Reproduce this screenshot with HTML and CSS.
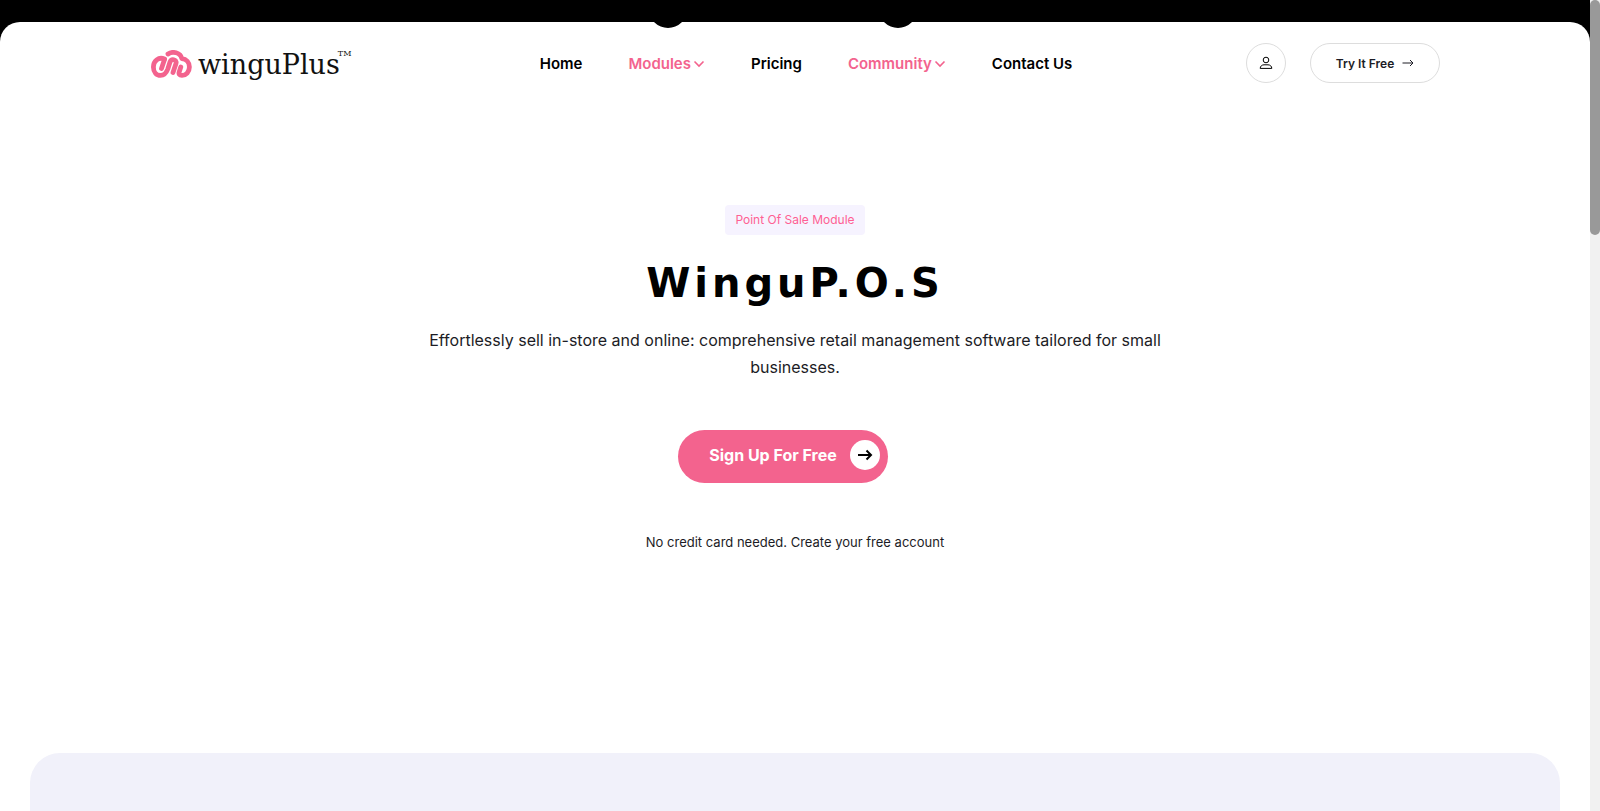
FILE: index.html
```html
<!DOCTYPE html>
<html lang="en">
<head>
<meta charset="utf-8">
<meta name="viewport" content="width=device-width, initial-scale=1">
<title>WinguP.O.S</title>
<link rel="stylesheet" href="styles.css">
</head>
<body>
<div class="page">
  <div class="sheet">
    <header class="header">
      <a class="logo" href="#">
        <svg class="logo-mark" viewBox="0 0 42 30" aria-hidden="true">
          <g fill="none" stroke="#f3638e" stroke-width="4.800" stroke-linecap="round" stroke-linejoin="round">
            <path d="M14.500 9.500L11.500 18.500"/>
            <path d="M14.500 9C8.500 6.500 3.400 11 3.400 17C3.400 22 6.500 25.400 10.500 25.400C14.500 25.400 16.500 22.500 17.800 19L20 12C21.200 8.500 27 9 26 13.500L23 22.500"/>
            <path d="M18 4C22.500 0.800 30.500 2.500 31.800 8.600C36.500 9 39.400 12.500 39.400 17C39.400 22 36 25.400 32 25.400C29.200 25.400 28.600 23.800 29.200 22L30.800 17"/>
          </g>
        </svg>
        <span class="logo-name">winguPlus</span><sup class="logo-tm">TM</sup>
      </a>
      <nav class="nav">
        <a class="nav-link" href="#">Home</a>
        <a class="nav-link nav-link-menu" href="#">Modules<svg class="chevron" viewBox="0 0 12 8" aria-hidden="true"><path d="M1.500 1.500L6 6L10.500 1.500"/></svg></a>
        <a class="nav-link" href="#">Pricing</a>
        <a class="nav-link nav-link-menu" href="#">Community<svg class="chevron" viewBox="0 0 12 8" aria-hidden="true"><path d="M1.500 1.500L6 6L10.500 1.500"/></svg></a>
        <a class="nav-link" href="#">Contact Us</a>
      </nav>
      <div class="actions">
        <a class="account" href="#" aria-label="Account">
          <svg class="account-icon" viewBox="0 0 14 14" aria-hidden="true"><circle cx="7" cy="4" r="2.800"/><path d="M1.200 12.400C1.200 10.200 3 8.800 5 8.800H9C11 8.800 12.800 10.200 12.800 12.400Z"/></svg>
        </a>
        <a class="try" href="#">Try It Free<svg class="try-arrow" viewBox="0 0 12 8" aria-hidden="true"><path d="M0.500 4H11M8 1L11 4L8 7"/></svg></a>
      </div>
    </header>
    <main class="main">
      <section class="hero">
        <span class="badge">Point Of Sale Module</span>
        <h1 class="title">WinguP.O.S</h1>
        <p class="lead">Effortlessly sell in-store and online: comprehensive retail management software tailored for small businesses.</p>
        <a class="signup" href="#">Sign Up For Free<span class="signup-disc"><svg class="signup-arrow" viewBox="0 0 16 12" aria-hidden="true"><path d="M1 6H14M9.500 1.500L14 6L9.500 10.500"/></svg></span></a>
        <p class="note">No credit card needed. Create your free account</p>
      </section>
      <section class="panel"></section>
    </main>
  </div>
</div>
<div class="scroll-track" aria-hidden="true"><div class="scroll-thumb"></div></div>
</body>
</html>
```
FILE: styles.css
```css
* {
  box-sizing: border-box;
}

body {
  margin: 0;
  display: flex;
  min-height: 100vh;
  background: #fff;
  color: #1c1c25;
  font-family: Inter, "Liberation Sans", sans-serif;
}

a {
  color: inherit;
  text-decoration: none;
}

svg {
  display: block;
  fill: none;
  stroke: currentColor;
  flex: none;
}

.page {
  flex: 1;
  display: flex;
  flex-direction: column;
  padding-top: 22px;
  background: #000;
}

.sheet {
  flex: 1;
  display: flex;
  flex-direction: column;
  background: #fff;
  border-radius: 20px 20px 0 0;
}

.header {
  display: flex;
  align-items: center;
  justify-content: space-between;
  height: 82px;
  padding: 0 150px;
}

.logo {
  display: flex;
  align-items: center;
  width: 216px;
  padding-top: 3px;
  color: #111;
}

.logo-mark {
  width: 42px;
  height: 30px;
}

.logo-name {
  margin-left: 6px;
  font: 27px/30px "DejaVu Serif", serif;
}

.logo-tm {
  align-self: flex-start;
  margin-left: -2px;
  font: 8px/8px "DejaVu Serif", serif;
}

.nav {
  display: flex;
  gap: 46px;
  padding-top: 2px;
  color: #000;
  font-size: 15px;
  font-weight: 600;
  line-height: 24px;
}

.nav-link-menu {
  position: relative;
  display: flex;
  align-items: center;
  gap: 2px;
  color: #f3638e;
}

.nav-link-menu::before {
  content: "";
  position: absolute;
  left: 50%;
  bottom: 48px;
  width: 38px;
  height: 38px;
  margin-left: -18px;
  border-radius: 50%;
  background: #000;
}

.chevron {
  width: 12px;
  height: 8px;
  stroke-width: 1.6;
}

.actions {
  display: flex;
  gap: 24px;
}

.account,
.try {
  display: flex;
  align-items: center;
  justify-content: center;
  height: 40px;
  border: 1px solid #ddd;
  border-radius: 20px;
}

.account {
  width: 40px;
  color: #000;
}

.account-icon {
  width: 14px;
  height: 14px;
  stroke-width: 1;
}

.try {
  gap: 8px;
  width: 130px;
  font-size: 12px;
  font-weight: 600;
}

.try-arrow {
  width: 12px;
  height: 8px;
  stroke-width: 1;
}

.main {
  flex: 1;
  display: flex;
  flex-direction: column;
}

.hero {
  display: flex;
  flex-direction: column;
  align-items: center;
  padding: 101px 24px 201px;
  text-align: center;
}

.badge {
  padding: 5px 10px;
  border-radius: 4px;
  background: #f6f3ff;
  color: #ff5f93;
  font-size: 12px;
  line-height: 20px;
}

.title {
  margin: 22px 0 18px;
  color: #000;
  font-family: "DejaVu Sans", Inter, sans-serif;
  font-size: 40px;
  font-weight: 700;
  line-height: 52px;
  letter-spacing: 4px;
}

.lead {
  max-width: 760px;
  margin: 0 0 49px;
  font-size: 16px;
  line-height: 27px;
}

.signup {
  display: flex;
  align-items: center;
  gap: 13px;
  height: 53px;
  margin: 0 24px 49px 0;
  padding: 0 8px 3px 31px;
  border-radius: 27px;
  background: #f3638e;
  color: #fff;
  font-size: 16px;
  font-weight: 700;
}

.signup-disc {
  display: flex;
  align-items: center;
  justify-content: center;
  width: 30px;
  height: 30px;
  border-radius: 50%;
  background: #fff;
  color: #000;
}

.signup-arrow {
  width: 16px;
  height: 12px;
  stroke-width: 2;
}

.note {
  margin: 0;
  font-size: 13px;
  line-height: 20px;
}

.panel {
  flex: 1;
  margin: 0 30px;
  border-radius: 30px 30px 0 0;
  background: #f1f1fa;
}

.scroll-track {
  width: 10px;
  background: #f1f1f1;
}

.scroll-thumb {
  height: 29%;
  border-radius: 5px;
  background: #999;
}
```
